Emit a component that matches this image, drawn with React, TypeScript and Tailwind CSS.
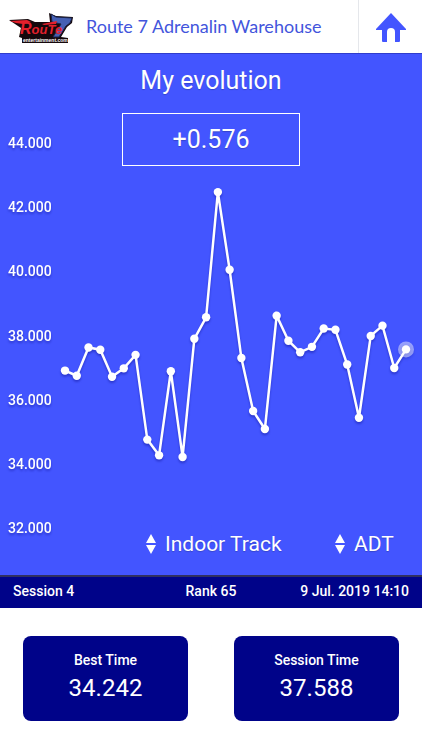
const LAPS = [
  36.91, 36.75, 37.63, 37.56, 36.72, 36.98, 37.4, 34.76, 34.27, 36.89, 34.22, 37.9, 38.57, 42.47, 40.05, 37.3, 35.65,
  35.09, 38.62, 37.84, 37.48, 37.65, 38.22, 38.18, 37.1, 35.44, 37.99, 38.31, 36.99, 37.57,
];
const TICKS = [44, 42, 40, 38, 36, 34, 32];

const lapX = (i: number) => 65 + (i * 341) / (LAPS.length - 1);
const lapY = (v: number) => 30 + (44 - v) * 32.1;

function Logo() {
  return (
    <svg viewBox="0 0 68 34" className="h-[34px] w-[68px] font-['Liberation_Sans',sans-serif]" role="img" aria-label="Route 7 Entertainment">
      <path d="M1 10 20 9 27 12 42 12 41 3 48 6 65 7 64 13 59 17 53 27 60 28 60 33 14 33 14 28 11 27 13 18 7 14Z" fill="#15080c" />
      <path d="M43 4 48 7 64 8 62 13 58 16 51 27 45 27 53 14 44 12Z" fill="#4560b4" stroke="#1a2348" strokeWidth="1" strokeLinejoin="round" />
      <path d="M2 11 19 10 23 12 15 14 8 13Z" fill="#e3202c" />
      <path d="M34 14 49 11 48 14 36 15Z" fill="#e3202c" />
      <text x="12" y="24" fontSize="16" fontWeight="700" fontStyle="italic" fill="#e3202c">
        R<tspan fontSize="13">ouTe</tspan>
      </text>
      <text x="15" y="32" fontSize="5" fontWeight="700" fill="white">entertainment.com</text>
    </svg>
  );
}

function HomeIcon() {
  return (
    <svg viewBox="0 0 32 30" className="h-[30px] w-8" fill="#4355ff" aria-hidden="true">
      <path d="M16 0 31 16V17H25V28Q25 29 24 29H20V19Q20 15 16 15T12 19V29H8Q7 29 7 28V17H1V16Z" />
    </svg>
  );
}

function Picker({ label, value }: { label: string; value: string }) {
  return (
    <label className="flex items-center gap-2">
      <svg viewBox="0 0 12 20" className="h-5 w-3" fill="white" aria-hidden="true">
        <path d="M6 0 11 9H1ZM1 11H11L6 20Z" />
      </svg>
      <select aria-label={label} className="appearance-none bg-transparent text-[21px] leading-7 text-white text-shadow-xs">
        <option>{value}</option>
      </select>
    </label>
  );
}

function EvolutionChart() {
  const last = LAPS.length - 1;
  return (
    <svg viewBox="0 0 422 445" className="col-start-1 row-start-1 w-full drop-shadow-[0_2px_1px_rgba(0,0,120,0.35)]" role="img" aria-label="Lap time per session">
      {TICKS.map((t) => (
        <text key={t} x="8" y={lapY(t) + 5} fontSize="14" fontWeight="500" fill="white">{t.toFixed(3)}</text>
      ))}
      <polyline fill="none" stroke="white" strokeWidth="2.5" points={LAPS.map((v, i) => `${lapX(i)},${lapY(v)}`).join(" ")} />
      <circle cx={lapX(last)} cy={lapY(LAPS[last])} r="8" fill="white" fillOpacity="0.45" />
      {LAPS.map((v, i) => (
        <circle key={i} cx={lapX(i)} cy={lapY(v)} r="4.2" fill="white" />
      ))}
    </svg>
  );
}

function TimeCard({ title, time }: { title: string; time: string }) {
  return (
    <div className="flex h-[85px] flex-1 flex-col items-center justify-center rounded-lg bg-[#000389] pb-0.5 text-white">
      <h2 className="text-sm font-medium leading-5">{title}</h2>
      <p className="text-2xl leading-9">{time}</p>
    </div>
  );
}

export default function App() {
  return (
    <div className="min-h-screen bg-white font-[Roboto,sans-serif]">
      <header className="flex h-[53px] items-stretch bg-white">
        <div className="flex flex-1 items-center gap-[10px] pl-2">
          <Logo />
          <h1 className="pb-0.5 font-[Lato,sans-serif] text-lg leading-6 text-[#4355dc]">Route 7 Adrenalin Warehouse</h1>
        </div>
        <button type="button" aria-label="Home" className="flex w-16 items-center justify-center border-l border-gray-200 pt-0.5">
          <HomeIcon />
        </button>
      </header>

      <main>
        <section className="border-t border-[#303dcc] bg-[#4355ff] pt-[9px] pb-[17px] text-white">
          <h2 className="text-center text-[25px] leading-9 text-shadow-xs">My evolution</h2>
          <div className="grid pt-[14px]">
            <EvolutionChart />
            <output className="col-start-1 row-start-1 flex h-[53px] w-[178px] items-center justify-center self-start justify-self-center border border-white text-[25px] text-shadow-xs">
              +0.576
            </output>
            <div className="col-start-1 row-start-1 flex justify-end gap-[52px] self-end pr-7">
              <Picker label="Track" value="Indoor Track" />
              <Picker label="Category" value="ADT" />
            </div>
          </div>
        </section>

        <section className="grid h-[33px] grid-cols-3 items-center border-t-2 border-[#303060] bg-[#000389] px-[13px] pb-1 text-sm font-medium text-white">
          <span>Session 4</span>
          <span className="text-center">Rank 65</span>
          <time className="text-right whitespace-nowrap">9 Jul. 2019 14:10</time>
        </section>

        <section className="flex gap-[46px] px-[23px] py-7">
          <TimeCard title="Best Time" time="34.242" />
          <TimeCard title="Session Time" time="37.588" />
        </section>
      </main>
    </div>
  );
}
